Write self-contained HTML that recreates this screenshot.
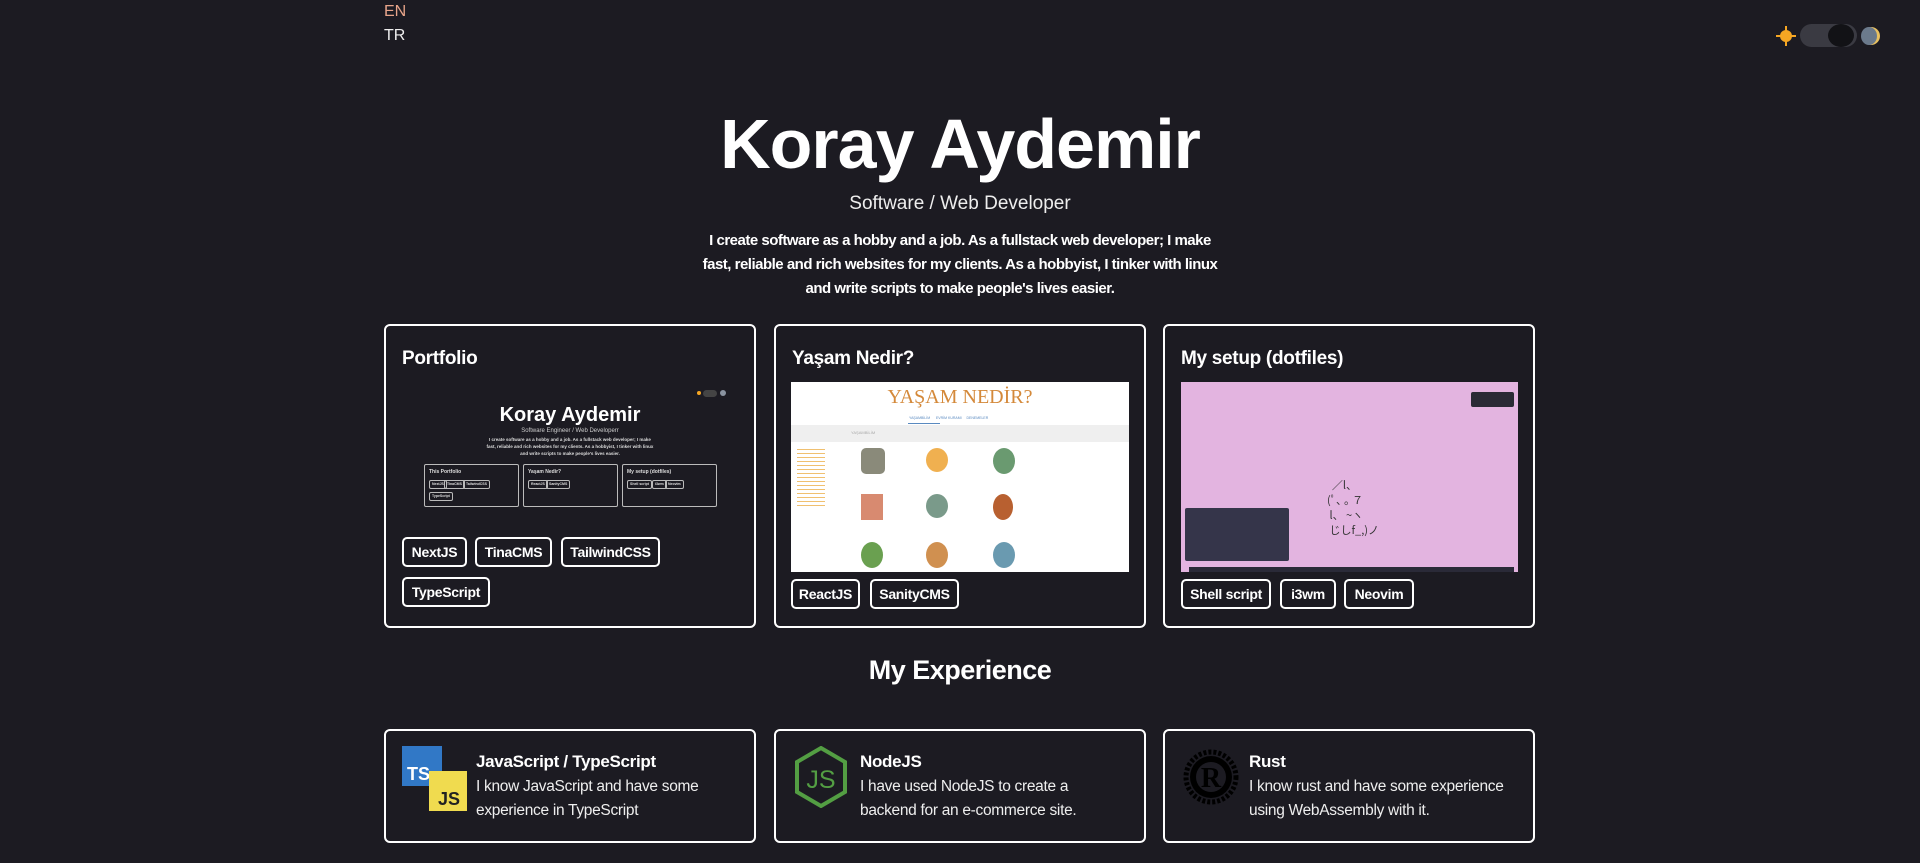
<!DOCTYPE html>
<html><head><meta charset="utf-8"><style>
*{margin:0;padding:0;box-sizing:border-box}
body{width:1920px;height:863px;background:#1c1b22;color:#fff;font-family:"Liberation Sans",sans-serif;position:relative;overflow:hidden}
.a{position:absolute}
.card{position:absolute;border:2px solid #fff;border-radius:6px;width:372px}
.ct{position:absolute;left:16px;font-weight:bold;font-size:19px;letter-spacing:-0.3px}
.tag{position:absolute;height:30px;border:2px solid #fff;border-radius:5px;font-weight:bold;font-size:14px;line-height:26px;text-align:center;letter-spacing:-0.3px}
.mc{position:absolute;border:1px solid #bbb;border-radius:2px;top:84px;height:43px;width:95px;font-size:5px;font-weight:bold;color:#ddd}
.mt{position:absolute;border:1px solid #bbb;border-radius:2px;height:9px;font-size:3.5px;line-height:7px;padding:0 2px}
.et{position:absolute;font-weight:bold;font-size:17px;top:21px;letter-spacing:-0.3px}
.ed{position:absolute;font-size:15.5px;line-height:24px;top:44px;color:#eee;letter-spacing:-0.3px}
</style></head><body>
<div class="a" style="left:384px;top:3px;font-size:16px;color:#e8a58a">EN</div>
<div class="a" style="left:384px;top:27px;font-size:16px;color:#eee">TR</div>
<!-- toggle -->
<div class="a" style="left:1780px;top:30px;width:12px;height:12px;border-radius:50%;background:#f5a623"></div>
<div class="a" style="left:1776px;top:35px;width:20px;height:2px;background:#f5a623"></div>
<div class="a" style="left:1785px;top:26px;width:2px;height:20px;background:#f5a623"></div>
<div class="a" style="left:1800px;top:24px;width:57px;height:23px;border-radius:12px;background:#3a3a42"></div>
<div class="a" style="left:1828px;top:24px;width:26px;height:23px;border-radius:50%;background:#121216"></div>
<div class="a" style="left:1862px;top:27px;width:18px;height:18px;border-radius:50%;background:#e8c060"></div>
<div class="a" style="left:1861px;top:27px;width:16px;height:18px;border-radius:50%;background:#6b7a8c"></div>

<div class="a" style="left:0;width:1920px;top:104px;text-align:center;font-size:70px;font-weight:bold;letter-spacing:-1px">Koray Aydemir</div>
<div class="a" style="left:0;width:1920px;top:193px;text-align:center;font-size:19px;color:#eee">Software / Web Developer</div>
<div class="a" style="left:0;width:1920px;top:229px;text-align:center;font-size:15px;font-weight:bold;line-height:24px;white-space:nowrap;letter-spacing:-0.5px">I create software as a hobby and a job. As a fullstack web developer; I make<br>fast, reliable and rich websites for my clients. As a hobbyist, I tinker with linux<br>and write scripts to make people's lives easier.</div>

<!-- card 1 -->
<div class="card" style="left:384px;top:324px;height:304px">
 <div class="ct" style="top:22px">Portfolio</div>
 <div class="a" style="left:9px;top:54px;width:350px;height:145px;background:#1c1b22">
  <div class="a" style="left:302px;top:11px;width:4px;height:4px;border-radius:50%;background:#f5a623"></div>
  <div class="a" style="left:308px;top:10px;width:14px;height:7px;border-radius:4px;background:#444"></div>
  <div class="a" style="left:325px;top:10px;width:6px;height:6px;border-radius:50%;background:#8a93a0"></div>
  <div class="a" style="left:0;width:350px;top:24px;text-align:center;font-size:20px;font-weight:bold">Koray Aydemir</div>
  <div class="a" style="left:0;width:350px;top:48px;text-align:center;font-size:6px;color:#ccc">Software Engineer / Web Developerr</div>
  <div class="a" style="left:0;width:350px;top:56px;text-align:center;font-size:4.5px;line-height:7px;font-weight:bold;color:#ddd">I create software as a hobby and a job. As a fullstack web developer; I make<br>fast, reliable and rich websites for my clients. As a hobbyist, I tinker with linux<br>and write scripts to make people's lives easier.</div>
  <div class="mc" style="left:29px"><div class="a" style="left:4px;top:4px">This Portfolio</div>
   <div class="mt" style="left:4px;top:15px">NextJS</div><div class="mt" style="left:19px;top:15px">TinaCMS</div><div class="mt" style="left:38px;top:15px">TailwindCSS</div><div class="mt" style="left:4px;top:27px">TypeScript</div></div>
  <div class="mc" style="left:128px"><div class="a" style="left:4px;top:4px">Yaşam Nedir?</div>
   <div class="mt" style="left:4px;top:15px">ReactJS</div><div class="mt" style="left:22px;top:15px">SanityCMS</div></div>
  <div class="mc" style="left:227px"><div class="a" style="left:4px;top:4px">My setup (dotfiles)</div>
   <div class="mt" style="left:4px;top:15px">Shell script</div><div class="mt" style="left:29px;top:15px">i3wm</div><div class="mt" style="left:42px;top:15px">Neovim</div></div>
 </div>
 <div class="tag" style="left:16px;top:211px;width:65px">NextJS</div>
 <div class="tag" style="left:89px;top:211px;width:77px">TinaCMS</div>
 <div class="tag" style="left:175px;top:211px;width:99px">TailwindCSS</div>
 <div class="tag" style="left:16px;top:251px;width:88px">TypeScript</div>
</div>

<!-- card 2 -->
<div class="card" style="left:774px;top:324px;height:304px">
 <div class="ct" style="top:22px">Yaşam Nedir?</div>
 <div class="a" style="left:15px;top:56px;width:338px;height:190px;background:#fff;overflow:hidden">
  <div class="a" style="left:0;width:338px;top:4px;text-align:center;font-family:'Liberation Serif',serif;font-size:20px;color:#d4893a">YAŞAM NEDİR?</div>
  <div class="a" style="left:118px;top:34px;font-size:3.5px;color:#5a8ac0">YAŞAMBİLİM &nbsp;&nbsp;&nbsp;&nbsp; EVRİM KURAMI &nbsp;&nbsp;&nbsp; DENEMELER</div>
  <div class="a" style="left:117px;top:41px;width:32px;height:1px;background:#5a8ac0"></div>
  <div class="a" style="left:0;top:43px;width:338px;height:17px;background:#efefef"></div>
  <div class="a" style="left:60px;top:48px;font-size:4px;color:#aaa">YAŞAMBİLİM</div>
  <div class="a" style="left:6px;top:64px;width:28px;height:60px;background:repeating-linear-gradient(#fff 0 3px,#f0c070 3px 4px)"></div>
  <div class="a" style="left:70px;top:66px;width:24px;height:26px;background:#8a8a7a;border-radius:5px"></div>
  <div class="a" style="left:135px;top:66px;width:22px;height:24px;background:#f0b050;border-radius:50%"></div>
  <div class="a" style="left:202px;top:66px;width:22px;height:26px;background:#6a9a70;border-radius:50%"></div>
  <div class="a" style="left:70px;top:112px;width:22px;height:26px;background:#d88a70"></div>
  <div class="a" style="left:135px;top:112px;width:22px;height:24px;background:#7a9a8a;border-radius:50%"></div>
  <div class="a" style="left:202px;top:112px;width:20px;height:26px;background:#b86030;border-radius:50%"></div>
  <div class="a" style="left:70px;top:160px;width:22px;height:26px;background:#6aa050;border-radius:50%"></div>
  <div class="a" style="left:135px;top:160px;width:22px;height:26px;background:#d09050;border-radius:50%"></div>
  <div class="a" style="left:202px;top:160px;width:22px;height:26px;background:#6a9ab0;border-radius:50%"></div>
 </div>
 <div class="tag" style="left:15px;top:253px;width:69px">ReactJS</div>
 <div class="tag" style="left:94px;top:253px;width:89px">SanityCMS</div>
</div>

<!-- card 3 -->
<div class="card" style="left:1163px;top:324px;height:304px">
 <div class="ct" style="top:22px">My setup (dotfiles)</div>
 <div class="a" style="left:16px;top:56px;width:337px;height:190px;background:#e3b4e0;overflow:hidden">
  <div class="a" style="left:290px;top:10px;width:43px;height:15px;background:#2a2a35;border-radius:2px"></div>
  <div class="a" style="left:4px;top:126px;width:104px;height:53px;background:#35354a;border-radius:2px"></div>
  <div class="a" style="left:8px;top:185px;width:325px;height:5px;background:#2a2a38"></div>
  <div class="a" style="left:146px;top:96px;font-family:'Noto Sans CJK JP',sans-serif;font-size:11px;line-height:15px;color:#333;white-space:pre">  ／l、
(ﾟ､ ｡ ７
 l、 ~ヽ
 じしf_,)ノ</div>
 </div>
 <div class="tag" style="left:16px;top:253px;width:90px">Shell script</div>
 <div class="tag" style="left:115px;top:253px;width:56px">i3wm</div>
 <div class="tag" style="left:179px;top:253px;width:70px">Neovim</div>
</div>

<div class="a" style="left:0;width:1920px;top:655px;text-align:center;font-size:27px;font-weight:bold;letter-spacing:-0.5px">My Experience</div>

<div class="card" style="left:384px;top:729px;height:114px">
 <div class="a" style="left:16px;top:15px;width:40px;height:40px;background:#3178c6;color:#fff;font-weight:bold;font-size:18px;padding:19px 0 0 5px;line-height:18px">TS</div>
 <div class="a" style="left:43px;top:40px;width:38px;height:40px;background:#f0db4f;color:#222;font-weight:bold;font-size:18px;padding:19px 0 0 9px;line-height:18px">JS</div>
 <div class="et" style="left:90px">JavaScript / TypeScript</div>
 <div class="ed" style="left:90px">I know JavaScript and have some<br>experience in TypeScript</div>
</div>
<div class="card" style="left:774px;top:729px;height:114px">
 <svg class="a" style="left:18px;top:15px" width="54" height="62" viewBox="0 0 54 62"><polygon points="27,2 51,16 51,46 27,60 3,46 3,16" fill="none" stroke="#539e43" stroke-width="4"/><text x="27" y="42" text-anchor="middle" font-family="Liberation Sans" font-size="25" fill="#539e43">JS</text></svg>
 <div class="et" style="left:84px">NodeJS</div>
 <div class="ed" style="left:84px">I have used NodeJS to create a<br>backend for an e-commerce site.</div>
</div>
<div class="card" style="left:1163px;top:729px;height:114px">
 <svg class="a" style="left:18px;top:18px" width="56" height="56" viewBox="0 0 56 56"><circle cx="28" cy="28" r="25" fill="none" stroke="#000" stroke-width="5" stroke-dasharray="3 2"/><circle cx="28" cy="28" r="21" fill="#000"/><circle cx="28" cy="28" r="15" fill="#1c1b22"/><text x="28" y="38" text-anchor="middle" font-family="Liberation Serif" font-weight="bold" font-size="28" fill="#000">R</text></svg>
 <div class="et" style="left:84px">Rust</div>
 <div class="ed" style="left:84px">I know rust and have some experience<br>using WebAssembly with it.</div>
</div>
</body></html>
